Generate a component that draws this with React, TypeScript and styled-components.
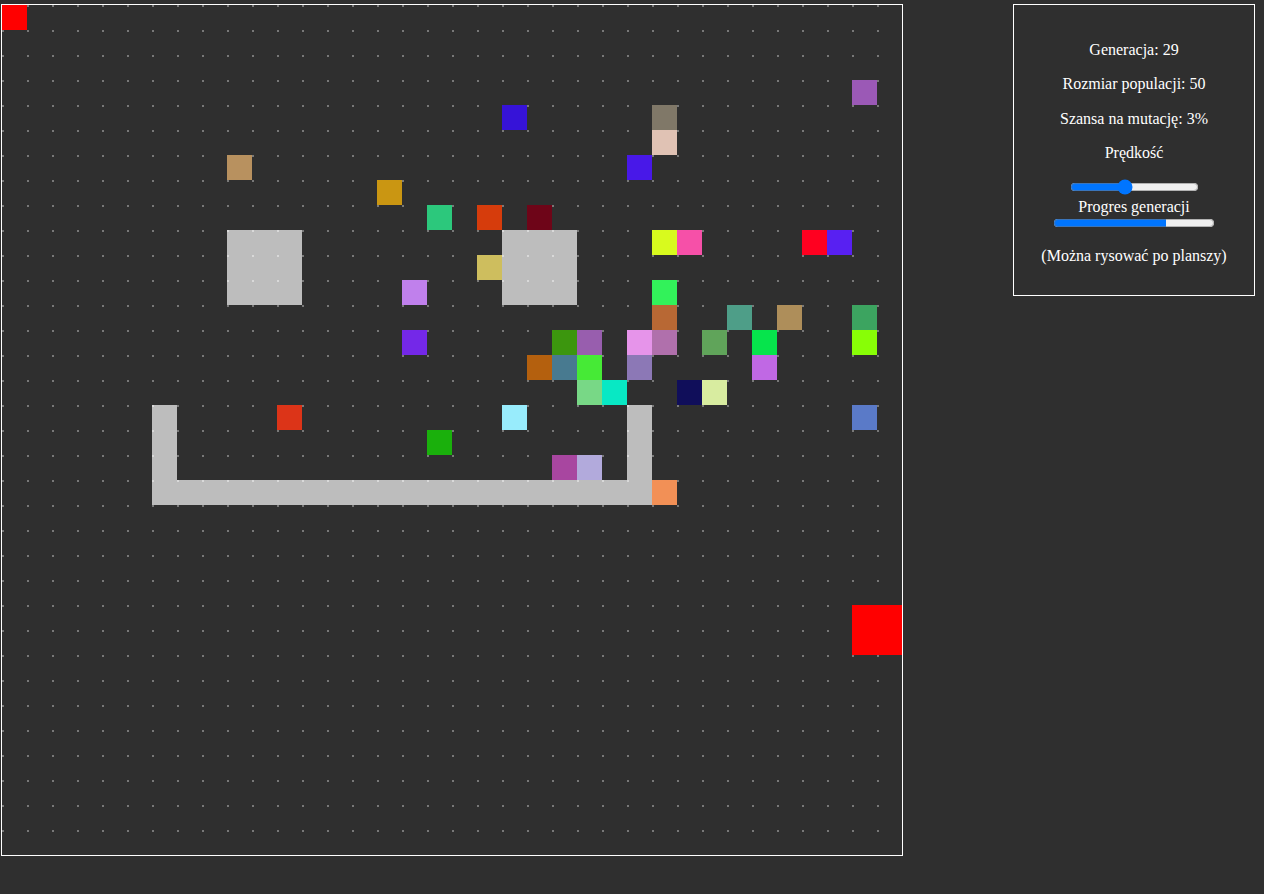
import React from 'react';
import styled, { createGlobalStyle } from 'styled-components';

const GlobalStyle = createGlobalStyle`
  body {
    margin: 0;
    background: #2f2f2f;
    font-family: "Liberation Serif", "Times New Roman", serif;
  }
`;

const COLS = 36;
const ROWS = 34;
const CELL = 25;

type Kind = 'empty' | 'wall' | 'agent';

const Page = styled.div`
  display: flex;
  justify-content: space-between;
  align-items: flex-start;
  padding: 4px 9px 0 1px;
`;

const Board = styled.div`
  display: grid;
  grid-template-columns: repeat(${COLS}, ${CELL}px);
  grid-auto-rows: ${CELL}px;
  border: 1px solid #ffffff;
  background: #2f2f2f;
  cursor: crosshair;
`;

const Cell = styled.div<{ $kind: Kind; $color?: string }>`
  width: ${CELL}px;
  height: ${CELL}px;
  background: ${({ $kind, $color }) =>
    $kind === 'agent'
      ? $color
      : $kind === 'wall'
      ? 'linear-gradient(#d9d9d9, #d9d9d9) 0 0 / 2px 2px no-repeat, #bdbdbd'
      : 'linear-gradient(#787878, #787878) 0 0 / 2px 2px no-repeat, #2f2f2f'};
`;

const Panel = styled.div`
  width: 240px;
  border: 1px solid #ffffff;
  padding: 20px 0 14px;
  color: #ffffff;
  font-size: 16px;
  line-height: 18.4px;
  text-align: center;
`;

const Stat = styled.p`
  margin: 16px 0;
`;

const SpeedSlider = styled.input`
  display: block;
  margin: 3px auto;
`;

const Caption = styled.div``;

const GenProgress = styled.progress`
  display: block;
  margin: -1px auto 0;
`;

// agents on the board: [col, row, colour]
const agents: [number, number, string][] = [
  [0, 0, '#ff0000'],
  [34, 24, '#ff0000'],
  [35, 24, '#ff0000'],
  [34, 25, '#ff0000'],
  [35, 25, '#ff0000'],
  [34, 3, '#9b59b6'],
  [20, 4, '#3613d8'],
  [26, 4, '#807868'],
  [26, 5, '#e0c2b4'],
  [25, 6, '#4818e8'],
  [9, 6, '#b8915f'],
  [15, 7, '#ca9612'],
  [17, 8, '#2cc87c'],
  [19, 8, '#d63c0c'],
  [21, 8, '#6e0518'],
  [19, 10, '#cebe5e'],
  [16, 11, '#c080ec'],
  [26, 9, '#d8fa1e'],
  [27, 9, '#f650a8'],
  [32, 9, '#ff0020'],
  [33, 9, '#5820f2'],
  [26, 11, '#32f25a'],
  [26, 12, '#b86834'],
  [29, 12, '#4e9e88'],
  [31, 12, '#ae8e5a'],
  [34, 12, '#3ca460'],
  [16, 13, '#7428e8'],
  [22, 13, '#3c960e'],
  [23, 13, '#985eae'],
  [25, 13, '#e694ea'],
  [26, 13, '#b070ac'],
  [28, 13, '#60a45a'],
  [30, 13, '#06e44c'],
  [34, 13, '#88fe06'],
  [21, 14, '#b4600e'],
  [22, 14, '#487a90'],
  [23, 14, '#46ea36'],
  [25, 14, '#8c78b6'],
  [30, 14, '#c068e4'],
  [23, 15, '#78d886'],
  [24, 15, '#08e8c4'],
  [27, 15, '#100e5a'],
  [28, 15, '#d8eca0'],
  [11, 16, '#dc3418'],
  [20, 16, '#98ecfc'],
  [34, 16, '#5a7ac8'],
  [17, 17, '#1ab00c'],
  [22, 18, '#a846a0'],
  [23, 18, '#b2aadc'],
  [26, 19, '#f29056'],
];

const walls = new Set<string>();
const addRect = (c0: number, r0: number, c1: number, r1: number) => {
  for (let c = c0; c <= c1; c++) for (let r = r0; r <= r1; r++) walls.add(`${c},${r}`);
};
addRect(9, 9, 11, 11);
addRect(20, 9, 22, 11);
addRect(6, 16, 6, 19);
addRect(6, 19, 25, 19);
addRect(25, 16, 25, 19);

const agentMap = new Map(agents.map(([c, r, color]) => [`${c},${r}`, color]));

const App: React.FC = () => {
  const cells = [];
  for (let r = 0; r < ROWS; r++) {
    for (let c = 0; c < COLS; c++) {
      const key = `${c},${r}`;
      const color = agentMap.get(key);
      const kind: Kind = color ? 'agent' : walls.has(key) ? 'wall' : 'empty';
      cells.push(<Cell key={key} $kind={kind} $color={color} />);
    }
  }

  return (
    <>
      <GlobalStyle />
      <Page>
        <Board>{cells}</Board>
        <Panel>
          <Stat>Generacja: 29</Stat>
          <Stat>Rozmiar populacji: 50</Stat>
          <Stat>Szansa na mutację: 3%</Stat>
          <Stat>Prędkość</Stat>
          <SpeedSlider type="range" min={0} max={100} defaultValue={42} />
          <Caption>Progres generacji</Caption>
          <GenProgress value={0.7} max={1} />
          <Stat>(Można rysować po planszy)</Stat>
        </Panel>
      </Page>
    </>
  );
};

export default App;
